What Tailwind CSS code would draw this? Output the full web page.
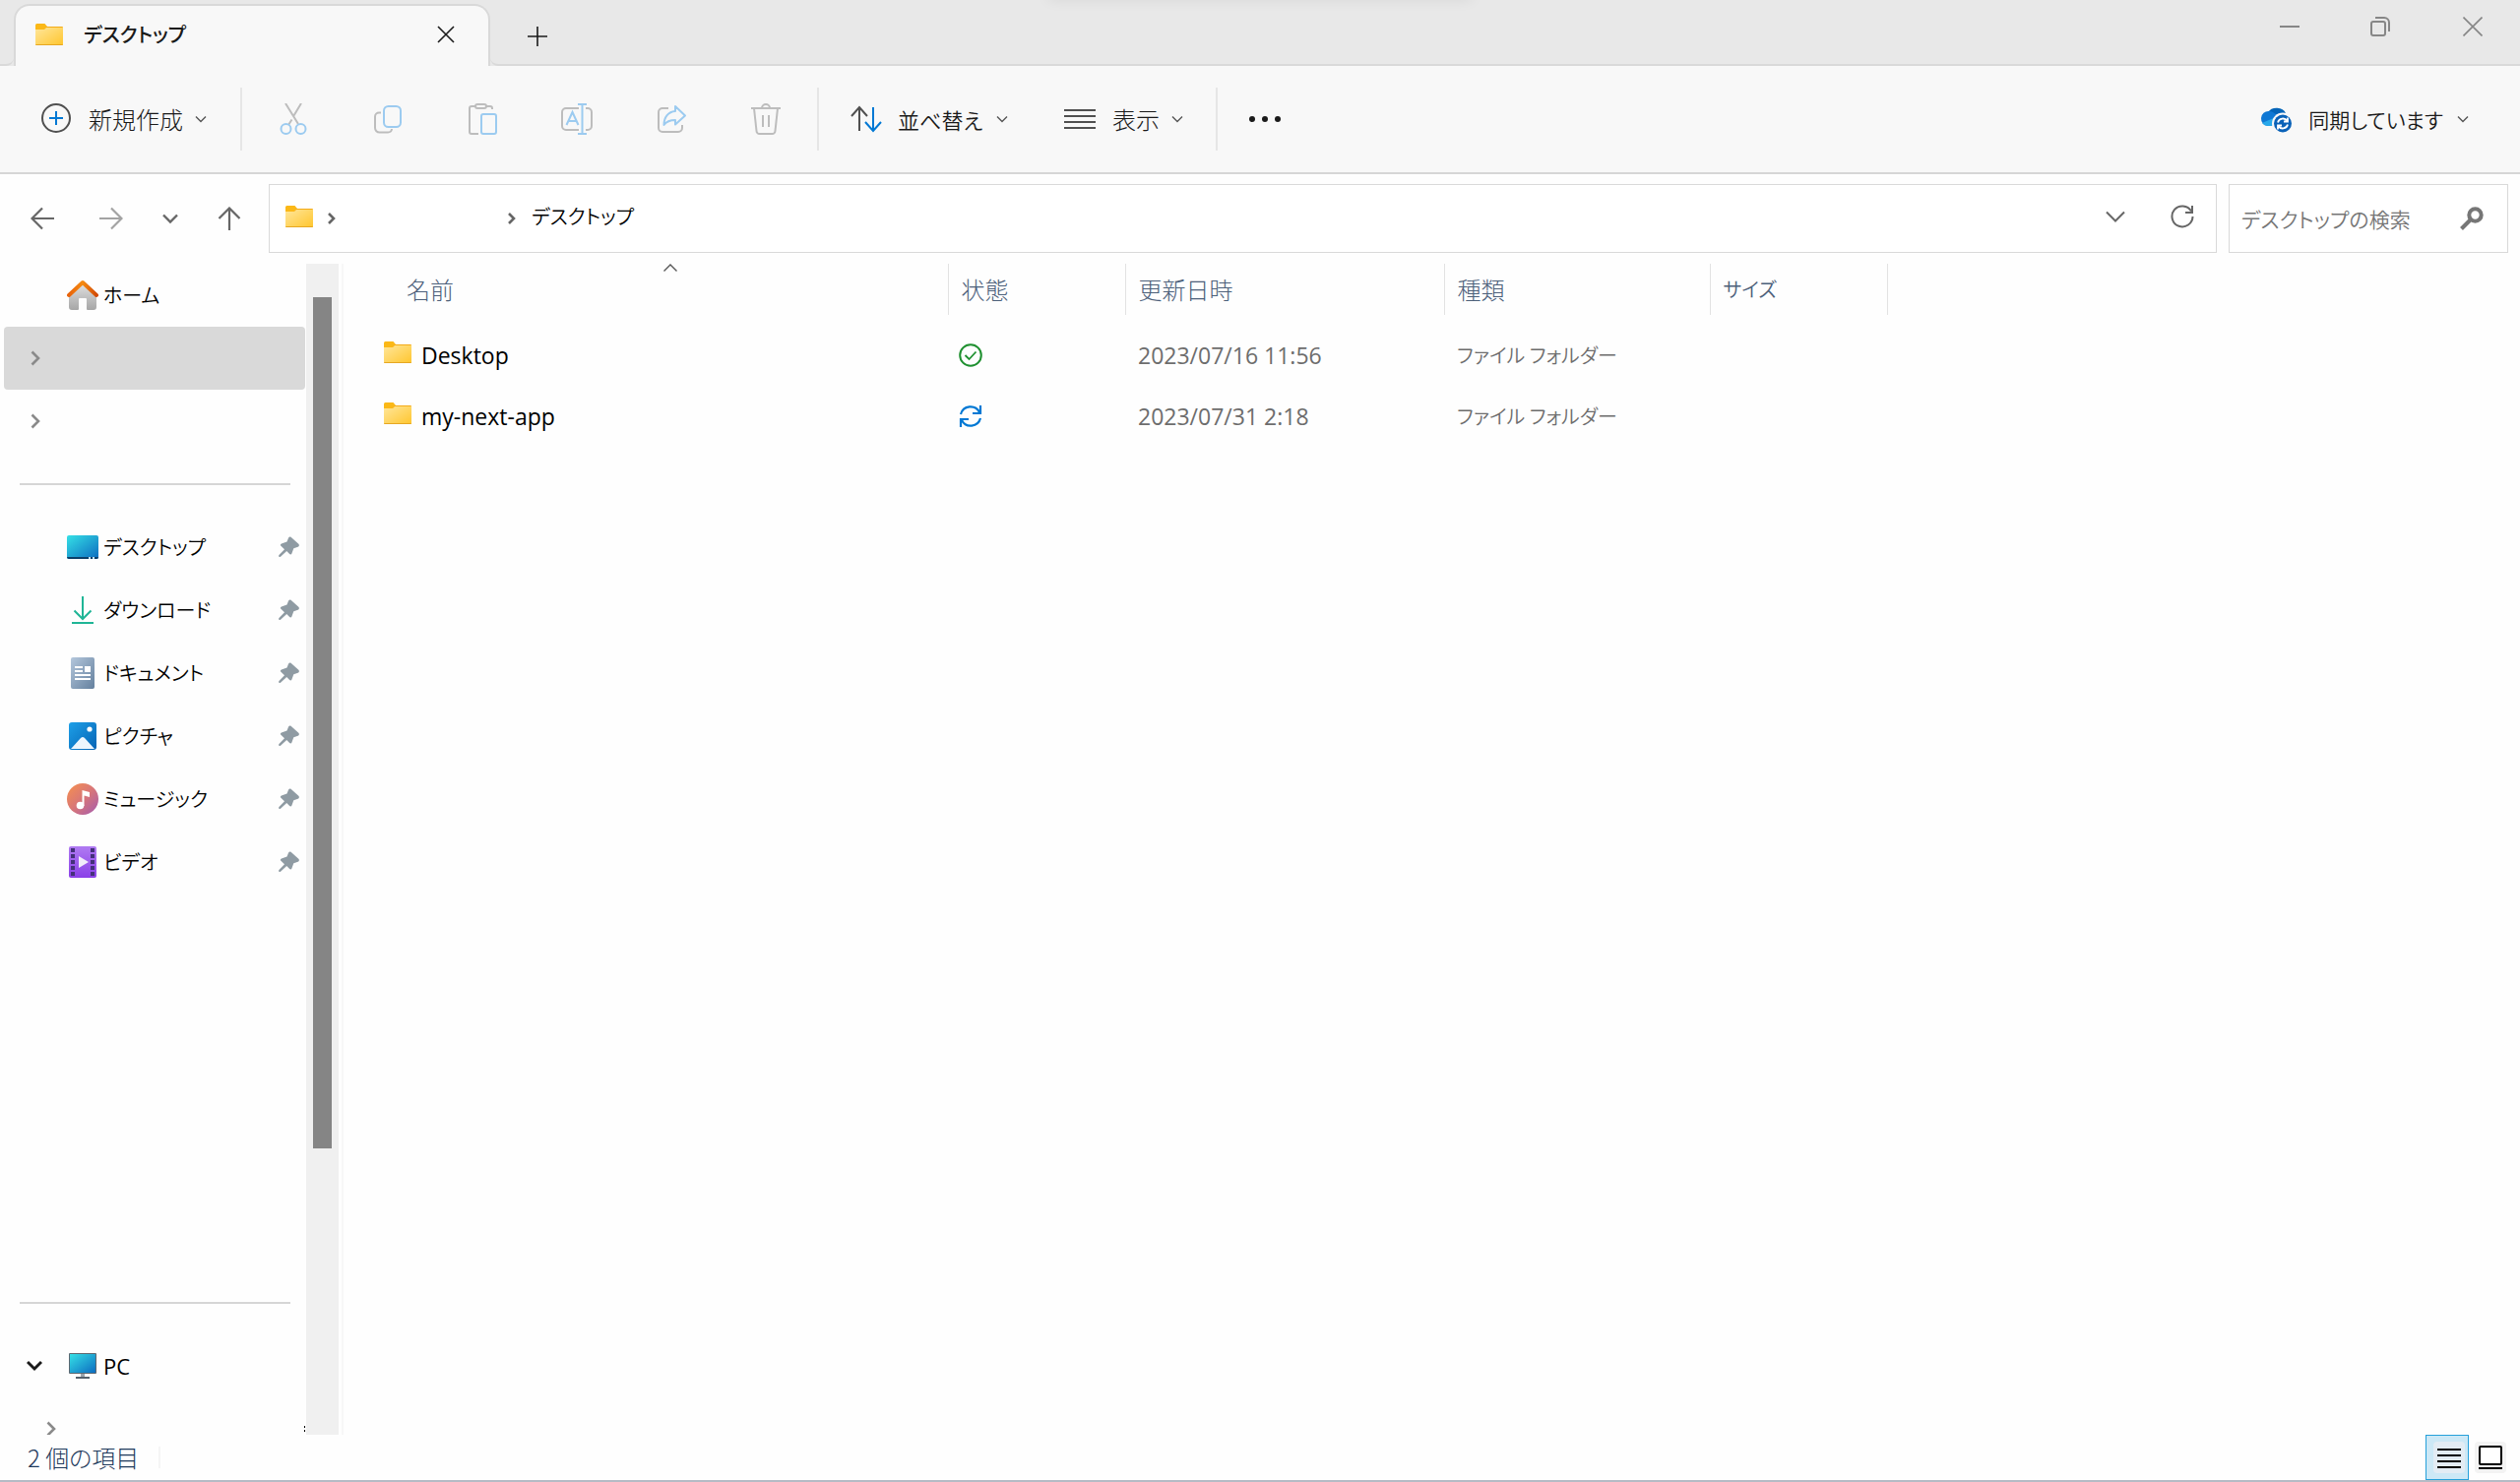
<!DOCTYPE html>
<html lang="ja">
<head>
<meta charset="utf-8">
<meta name="viewport" content="width=device-width, initial-scale=1">
<title>デスクトップ</title>
<script src="https://cdn.jsdelivr.net/npm/@tailwindcss/browser@4"></script>
</head>
<body class="flex h-screen flex-col overflow-hidden bg-[#fefefe] font-['Noto_Sans_CJK_JP',sans-serif] text-[24px] leading-8 font-light text-[#1a1a1a] [font-feature-settings:'palt']">

<!-- Shared icons -->
<svg class="absolute size-0" aria-hidden="true">
  <defs>
    <linearGradient id="gFolder" x1="0" y1="0" x2="1" y2="1"><stop offset="0" stop-color="#ffe69a"/><stop offset="1" stop-color="#ffc62e"/></linearGradient>
    <linearGradient id="gScreen" x1="0" y1="0" x2="1" y2="1"><stop offset="0" stop-color="#35e0e6"/><stop offset="1" stop-color="#0c6cc0"/></linearGradient>
    <linearGradient id="gRoof" x1="0" y1="0" x2="1" y2="0"><stop offset="0" stop-color="#e8640c"/><stop offset=".5" stop-color="#f58a10"/><stop offset="1" stop-color="#d24a06"/></linearGradient>
    <linearGradient id="gWall" x1="0" y1="0" x2="0" y2="1"><stop offset="0" stop-color="#e2e2e2"/><stop offset="1" stop-color="#a6a6a6"/></linearGradient>
    <linearGradient id="gDoc" x1="0" y1="0" x2="1" y2="1"><stop offset="0" stop-color="#b4c7dc"/><stop offset="1" stop-color="#64809e"/></linearGradient>
    <linearGradient id="gPic" x1="0" y1="0" x2="1" y2="1"><stop offset="0" stop-color="#1da0e8"/><stop offset="1" stop-color="#0663b4"/></linearGradient>
    <linearGradient id="gMusic" x1="0" y1="0" x2="1" y2="1"><stop offset="0" stop-color="#f7914d"/><stop offset=".5" stop-color="#d87678"/><stop offset="1" stop-color="#a45bb0"/></linearGradient>
    <linearGradient id="gVideo" x1="0" y1="0" x2="0" y2="1"><stop offset="0" stop-color="#b07bf2"/><stop offset="1" stop-color="#8a3fe8"/></linearGradient>
  </defs>
  <symbol id="folder" viewBox="0 0 28 22">
    <path d="M0 1.500A1.500 1.500 0 0 1 1.500 0H9.500L12 3V8H0z" fill="#fbb817"/>
    <path d="M11 3H27a1 1 0 0 1 1 1v2H9z" fill="#f3ab18"/>
    <path d="M0 6H9l2-2H28V21a1 1 0 0 1-1 1H1a1 1 0 0 1-1-1z" fill="url(#gFolder)"/>
    <path d="M0 21H28a1 1 0 0 1-1 1H1a1 1 0 0 1-1-1z" fill="#e6a722"/>
  </symbol>
  <symbol id="down" viewBox="0 0 12 8"><path d="M1 1.500l5 5 5-5" fill="none" stroke="currentColor" stroke-width="1.400"/></symbol>
  <symbol id="right" viewBox="0 0 10 16"><path d="M1.500 1.500L8 8l-6.500 6.500" fill="none" stroke="currentColor" stroke-width="2.600"/></symbol>
  <symbol id="pin" viewBox="0 0 22 22"><path d="M12.500.8l7.800 7c1 .9.700 2.500-.6 2.900l-4.400 1.500-1.900 5.400c-.4 1-1.500 1.200-2.200.5l-3-3L1.700 21 .2 20.800v-1.500l5.800-6-3.600-3.500c-.8-.8-.5-2 .5-2.400l5.600-1.800 1.600-4c.4-1 1.600-1.400 2.400-.8z" fill="#8f9ba3"/></symbol>
</svg>

<!-- Title bar -->
<header class="relative flex h-[67px] shrink-0 items-end bg-[#e8e8e8]">
  <div class="absolute top-[-10px] left-[1065px] h-2.5 w-[430px] shadow-[0_0_14px_rgba(0,0,0,0.08)]"></div>
  <div class="h-full w-[14px] rounded-br-lg border-b-2 border-[#d9d9d9]"></div>
  <div class="flex h-[63px] w-[484px] items-center rounded-t-2xl border-2 border-b-0 border-[#d9d9d9] bg-[#f8f8f8] pr-[34px] pb-1 pl-5">
    <svg class="h-[22px] w-7"><use href="#folder"/></svg>
    <span class="ml-[21px] text-[20px] font-medium">デスクトップ</span>
    <button class="ml-auto" aria-label="タブを閉じる"><svg class="size-[18px]" viewBox="0 0 18 18" fill="none" stroke="#1a1a1a" stroke-width="1.600"><path d="M1 1l16 16M17 1L1 17"/></svg></button>
  </div>
  <div class="flex h-full flex-1 rounded-bl-lg border-b-2 border-[#d9d9d9]">
    <button class="ml-6 flex w-12 items-center justify-center pt-2" aria-label="新しいタブ"><svg class="size-5" viewBox="0 0 20 20" fill="none" stroke="#1a1a1a" stroke-width="1.600"><path d="M10 0v20M0 10h20"/></svg></button>
    <div class="ml-auto flex h-[54px] text-[#868686]">
      <button class="flex w-[92px] items-center justify-center" aria-label="最小化"><svg class="size-5" viewBox="0 0 20 20" stroke="currentColor" stroke-width="2"><path d="M0 10h20"/></svg></button>
      <button class="flex w-[92px] items-center justify-center" aria-label="元に戻す"><svg class="size-5" viewBox="0 0 20 20" fill="none" stroke="currentColor" stroke-width="2"><rect x="1" y="5" width="14" height="14" rx="2"/><path d="M5 1h9a5 5 0 0 1 5 5v9"/></svg></button>
      <button class="flex w-24 items-center justify-center" aria-label="閉じる"><svg class="size-5" viewBox="0 0 20 20" fill="none" stroke="currentColor" stroke-width="1.600"><path d="M.5.5l19 19M19.500.5l-19 19"/></svg></button>
    </div>
  </div>
</header>

<!-- Command bar -->
<nav class="flex h-[110px] shrink-0 items-center border-b-2 border-[#d6d6d6] bg-[#f8f8f8]">
  <button class="flex h-16 w-[244px] items-center pl-[41px]">
    <svg class="size-8" viewBox="0 0 32 32" fill="none"><circle cx="16" cy="15" r="14" stroke="#505050" stroke-width="2"/><path d="M16 8v14M9 15h14" stroke="#0078d4" stroke-width="2"/></svg>
    <span class="ml-[17px]">新規作成</span>
    <svg class="ml-3 h-2 w-3 text-[#555]"><use href="#down"/></svg>
  </button>
  <div class="h-16 w-0.5 bg-[#e6e6e6]"></div>
  <div class="mx-1 flex">
    <button class="flex h-16 w-24 items-center justify-center" aria-label="切り取り"><svg class="size-8" viewBox="0 0 32 32" fill="none" stroke-width="2"><path d="M8 0l13 21M24 0l-7.500 12.500M14.500 16.500L11 22" stroke="#bdbdbd"/><g stroke="#9ccbf0"><circle cx="8.500" cy="26" r="5"/><circle cx="23.500" cy="26" r="5"/></g></svg></button>
    <button class="flex h-16 w-24 items-center justify-center" aria-label="コピー"><svg class="size-8" viewBox="0 0 32 32" fill="none" stroke-width="2"><path d="M9 9.500H7A4 4 0 0 0 3 13.500V25a4.500 4.500 0 0 0 4.500 4.500H16a4 4 0 0 0 4-3.500" stroke="#bdbdbd"/><rect x="12" y="3" width="17" height="21" rx="4.500" stroke="#9ccbf0"/></svg></button>
    <button class="flex h-16 w-24 items-center justify-center" aria-label="貼り付け"><svg class="size-8" viewBox="0 0 32 32" fill="none" stroke-width="2"><path d="M9 3H5a2 2 0 0 0-2 2v24a2 2 0 0 0 2 2h7M20 3h4a2 2 0 0 1 2 2v1" stroke="#bdbdbd"/><rect x="9" y="1" width="11" height="4" rx="2" stroke="#bdbdbd"/><rect x="15" y="11" width="15" height="20" rx="2" stroke="#9ccbf0"/></svg></button>
    <button class="flex h-16 w-24 items-center justify-center" aria-label="名前の変更"><svg class="size-8" viewBox="0 0 32 32" fill="none" stroke-width="2"><path d="M18 5H5a4 4 0 0 0-4 4v14a4 4 0 0 0 4 4h13M25 5h2a4 4 0 0 1 4 4v14a4 4 0 0 1-4 4h-2" stroke="#bdbdbd"/><path d="M17 1h9M17 31h9M21.500 1v30M5.500 22L11.500 9l6 13M7.500 18h8" stroke="#9ccbf0"/></svg></button>
    <button class="flex h-16 w-24 items-center justify-center" aria-label="共有"><svg class="size-8" viewBox="0 0 32 32" fill="none" stroke-width="2"><path d="M13 5H7a4 4 0 0 0-4 4v16a4 4 0 0 0 4 4h16a4 4 0 0 0 4-4v-3" stroke="#bdbdbd"/><path d="M20 3l10 9.500L20 21.500V17c-5 0-9 1.500-11.500 5C8.500 14 13 8.500 20 8z" stroke="#9ccbf0" stroke-linejoin="round"/></svg></button>
    <button class="flex h-16 w-24 items-center justify-center" aria-label="削除"><svg class="size-8" viewBox="0 0 32 32" fill="none" stroke="#bdbdbd" stroke-width="2"><path d="M1 5h30M4 5l2.500 23a3 3 0 0 0 3 3h13a3 3 0 0 0 3-3L28 5M12 5a4 4 0 0 1 8 0M13 12v12M19 12v12"/></svg></button>
  </div>
  <div class="h-16 w-0.5 bg-[#e6e6e6]"></div>
  <button class="flex h-16 w-[216px] items-center pl-8">
    <svg class="size-8" viewBox="0 0 32 32" fill="none" stroke-width="2"><path d="M9 28V4M1 13l8-9 8 9" stroke="#505050"/><path d="M23 4v24M15 19l8 9 8-9" stroke="#0078d4"/></svg>
    <span class="ml-4 text-[22px] font-[350]">並べ替え</span>
    <svg class="ml-3.5 h-2 w-3 text-[#555]"><use href="#down"/></svg>
  </button>
  <button class="flex h-16 w-[187px] items-center pl-[33px]">
    <svg class="size-8" viewBox="0 0 32 32" stroke="#505050" stroke-width="2"><path d="M0 7h32M0 13h32M0 19h32M0 25h32"/></svg>
    <span class="ml-[17px]">表示</span>
    <svg class="ml-3 h-2 w-3 text-[#555]"><use href="#down"/></svg>
  </button>
  <div class="h-16 w-0.5 bg-[#e6e6e6]"></div>
  <button class="flex h-16 w-24 items-center justify-center" aria-label="もっと見る"><svg class="size-8" viewBox="0 0 32 32" fill="#1a1a1a"><circle cx="3" cy="16" r="3"/><circle cx="16" cy="16" r="3"/><circle cx="29" cy="16" r="3"/></svg></button>
  <button class="mr-[52px] ml-auto flex h-16 items-center">
    <svg class="size-8" viewBox="0 0 32 32"><path d="M8 9a10 8.500 0 0 1 18 1L16 14z" fill="#0364b8"/><path d="M8 22a7.500 7.500 0 0 1 1-15c3 0 5 1.500 7 3l10 3-4 9z" transform="translate(0 1)" fill="#0f78d4"/><path d="M2 20l14-6 6 9H8a7.500 7.500 0 0 1-6-3z" fill="#28a8ea"/><circle cx="23" cy="20.500" r="11" fill="#f8f8f8"/><circle cx="23" cy="20.500" r="9" fill="#0a62b8"/><path d="M18 19.500a5.200 5.200 0 0 1 9.500-1.500M28 21.500a5.200 5.200 0 0 1-9.500 1.500M28 14.500v4h-4M18 26.500v-4h4" fill="none" stroke="#fff" stroke-width="1.800"/></svg>
    <span class="ml-[17px] text-[21px] font-[350]">同期しています</span>
    <svg class="ml-3.5 h-2 w-3 text-[#555]"><use href="#down"/></svg>
  </button>
</nav>

<!-- Navigation and address row -->
<div class="flex h-[91px] shrink-0 items-start pt-2.5 pr-3 text-[#666]">
  <div class="flex h-[70px] w-[273px] items-center pl-[31px]">
    <button aria-label="戻る"><svg class="size-6" viewBox="0 0 24 24" fill="none" stroke="currentColor" stroke-width="2.200"><path d="M24 12H2M12 1.500L1.500 12 12 22.500"/></svg></button>
    <button class="ml-[46px] text-[#a3a3a3]" aria-label="進む"><svg class="size-6" viewBox="0 0 24 24" fill="none" stroke="currentColor" stroke-width="2.200"><path d="M0 12h22M12 1.500L22.500 12 12 22.500"/></svg></button>
    <button class="ml-10" aria-label="最近表示した場所"><svg class="h-3 w-4" viewBox="0 0 16 12" fill="none" stroke="currentColor" stroke-width="2.400"><path d="M1 2.500l7 7 7-7"/></svg></button>
    <button class="ml-10" aria-label="上へ"><svg class="size-6" viewBox="0 0 24 24" fill="none" stroke="currentColor" stroke-width="2.200"><path d="M12 24V2M1.500 12L12 1.500 22.500 12"/></svg></button>
  </div>
  <div class="flex h-[70px] flex-1 items-center border border-[#d9d9d9] bg-white pb-1 pl-4">
    <svg class="h-[22px] w-7"><use href="#folder"/></svg>
    <svg class="mt-1 ml-[15px] h-3 w-2" viewBox="0 0 8 12" fill="none" stroke="currentColor" stroke-width="2.600"><path d="M1 1l5 5-5 5"/></svg>
    <svg class="mt-1 ml-[175px] h-3 w-2" viewBox="0 0 8 12" fill="none" stroke="currentColor" stroke-width="2.600"><path d="M1 1l5 5-5 5"/></svg>
    <a href="#" class="ml-4 text-[20px] font-[350] text-black">デスクトップ</a>
    <button class="ml-auto" aria-label="以前の場所"><svg class="h-3 w-5" viewBox="0 0 20 12" fill="none" stroke="currentColor" stroke-width="2"><path d="M1 1.500l9 9 9-9"/></svg></button>
    <button class="mr-[22px] ml-[46px]" aria-label="最新の情報に更新"><svg class="size-6" viewBox="0 0 24 24" fill="none" stroke="currentColor" stroke-width="2"><path d="M22.500 12A10.500 10.500 0 1 1 21 6.500M22 1v7h-7"/></svg></button>
  </div>
  <label class="ml-3 flex h-[70px] w-[284px] items-center border border-[#d9d9d9] bg-white pr-6 pl-3">
    <input type="search" aria-label="検索" placeholder="デスクトップの検索" class="w-0 flex-1 text-[21px] font-[350] outline-none placeholder:text-[#767676]">
    <svg class="size-6" viewBox="0 0 24 24" fill="none" stroke="#767676" stroke-width="4"><circle cx="15.500" cy="8.500" r="6.200"/><path d="M11 13L1.500 22.500"/></svg>
  </label>
</div>

<main class="flex min-h-0 flex-1 font-[350]">
  <!-- Navigation pane -->
  <aside class="flex w-[311px] shrink-0 flex-col overflow-hidden text-[20px] text-black">
    <a href="#" class="flex h-16 shrink-0 items-center pl-[68px]">
      <svg class="size-8" viewBox="0 0 32 32"><path d="M2 14L16 3l14 11v14a3 3 0 0 1-3 3h-6a1 1 0 0 1-1-1V20a1 1 0 0 0-1-1h-6a1 1 0 0 0-1 1v10a1 1 0 0 1-1 1H5a3 3 0 0 1-3-3z" fill="url(#gWall)"/><path d="M2 16L16 3l14 13" fill="none" stroke="url(#gRoof)" stroke-width="4" stroke-linecap="round" stroke-linejoin="round"/></svg>
      <span class="ml-[5px]">ホーム</span>
    </a>
    <button class="mr-px ml-1 flex h-16 shrink-0 items-center rounded-sm bg-[#d9d9d9] pl-[27px] text-[#8a8a8a]" aria-label="展開"><svg class="h-4 w-2.5"><use href="#right"/></svg></button>
    <button class="ml-1 flex h-16 shrink-0 items-center pl-[27px] text-[#8a8a8a]" aria-label="展開"><svg class="h-4 w-2.5"><use href="#right"/></svg></button>
    <div class="flex h-16 shrink-0 items-center pr-4 pl-5"><hr class="h-0.5 flex-1 border-0 bg-[#d6d6d6]"></div>
    <a href="#" class="flex h-16 shrink-0 items-center pr-1.5 pl-[68px]">
      <svg class="size-8" viewBox="0 0 32 32"><rect y="4" width="32" height="24" rx="2" fill="url(#gScreen)"/><path d="M0 26h32a2 2 0 0 1-2 2H2a2 2 0 0 1-2-2z" fill="#0b3f69"/><path d="M22 26h2v2h-2zM26 26h2v2h-2z" fill="#bfe0f5"/></svg>
      <span class="ml-[5px]">デスクトップ</span><svg class="ml-auto size-[22px]"><use href="#pin"/></svg>
    </a>
    <a href="#" class="flex h-16 shrink-0 items-center pr-1.5 pl-[68px]">
      <svg class="size-8" viewBox="0 0 32 32" fill="none" stroke="#1fb596" stroke-width="2"><path d="M16 2v22M7.500 16.500L16 25l8.500-8.500M5 29h22"/></svg>
      <span class="ml-[5px]">ダウンロード</span><svg class="ml-auto size-[22px]"><use href="#pin"/></svg>
    </a>
    <a href="#" class="flex h-16 shrink-0 items-center pr-1.5 pl-[68px]">
      <svg class="size-8" viewBox="0 0 32 32"><rect x="4" width="24" height="32" rx="2" fill="url(#gDoc)"/><path d="M8 10h8M8 14h8M8 18h16M8 22h16" stroke="#fff" stroke-width="2"/><path d="M18 9h6v6h-6z" fill="#fff"/></svg>
      <span class="ml-[5px]">ドキュメント</span><svg class="ml-auto size-[22px]"><use href="#pin"/></svg>
    </a>
    <a href="#" class="flex h-16 shrink-0 items-center pr-1.5 pl-[68px]">
      <svg class="size-8" viewBox="0 0 32 32"><rect x="2" y="2" width="28" height="28" rx="3" fill="url(#gPic)"/><path d="M4 29L14 18a3 3 0 0 1 4 0l10 11z" fill="#eef6fd"/><circle cx="23" cy="9" r="2.600" fill="#fff"/></svg>
      <span class="ml-[5px]">ピクチャ</span><svg class="ml-auto size-[22px]"><use href="#pin"/></svg>
    </a>
    <a href="#" class="flex h-16 shrink-0 items-center pr-1.5 pl-[68px]">
      <svg class="size-8" viewBox="0 0 32 32"><circle cx="16" cy="16" r="16" fill="url(#gMusic)"/><circle cx="13.500" cy="22.500" r="3.800" fill="#fff"/><path d="M15.500 7l7.500 2v5l-5.500-1.500V23h-2z" fill="#fff"/></svg>
      <span class="ml-[5px]">ミュージック</span><svg class="ml-auto size-[22px]"><use href="#pin"/></svg>
    </a>
    <a href="#" class="flex h-16 shrink-0 items-center pr-1.5 pl-[68px]">
      <svg class="size-8" viewBox="0 0 32 32"><rect x="2" width="28" height="32" rx="2" fill="url(#gVideo)"/><path d="M6 2v29M26 2v29" stroke="#44307a" stroke-width="4" stroke-dasharray="4 2"/><path d="M12 10v12l10-6z" fill="#f1ecfa"/></svg>
      <span class="ml-[5px]">ビデオ</span><svg class="ml-auto size-[22px]"><use href="#pin"/></svg>
    </a>
    <div class="h-96 shrink-0"></div>
    <div class="flex h-16 shrink-0 items-center pr-4 pl-5"><hr class="h-0.5 flex-1 border-0 bg-[#d6d6d6]"></div>
    <a href="#" class="flex h-16 shrink-0 items-center pl-[27px]">
      <svg class="h-3 w-4" viewBox="0 0 16 12" fill="none" stroke="#1a1a1a" stroke-width="3"><path d="M1 2l7 7 7-7"/></svg>
      <svg class="ml-[25px] size-8" viewBox="0 0 32 32"><path d="M14 24h4v4h-4z" fill="#9aa3ab"/><path d="M9 27h14v2H9z" fill="#54606b"/><rect x="2" y="3" width="28" height="21" rx="1" fill="#5c6770"/><rect x="3" y="4" width="26" height="19" fill="url(#gScreen)"/></svg>
      <span class="ml-[5px] font-['Open_Sans',sans-serif] text-[22px] font-normal">PC</span>
    </a>
    <button class="flex h-16 shrink-0 items-center pl-[47px] text-[#8a8a8a]" aria-label="展開"><svg class="h-4 w-2.5"><use href="#right"/></svg><svg class="mr-px ml-auto h-1.5 w-px" viewBox="0 0 1 6" fill="#000"><path d="M0 0h1v2H0zM0 4h1v2H0z"/></svg></button>
  </aside>
  <!-- Scroll bar -->
  <div class="flex w-[33px] shrink-0 flex-col items-center bg-[#f0f0f0] pt-[34px]">
    <div class="h-[865px] w-[19px] bg-[#858585]"></div>
  </div>
  <div class="ml-[3px] w-0.5 shrink-0 bg-[#f7f7f7]"></div>

  <!-- File list -->
  <section class="flex-1">
    <table class="table-fixed border-collapse text-left text-[20px] text-[#6d6d6d]">
      <thead class="text-[24px] text-[#4c607a]">
        <tr class="h-[52px]">
          <th class="relative w-[614px] border-r border-[#e2e2e2] pl-16 font-light">名前
            <svg class="absolute top-0 left-[325px] h-2 w-3.5" viewBox="0 0 14 8" fill="none" stroke="#555" stroke-width="1.400"><path d="M.5 7.500L7 1l6.500 6.500"/></svg>
          </th>
          <th class="w-[180px] border-r border-[#e2e2e2] pl-[13px] font-light">状態</th>
          <th class="w-[324px] border-r border-[#e2e2e2] pl-[13px] font-light">更新日時</th>
          <th class="w-[270px] border-r border-[#e2e2e2] pl-[13px] font-light">種類</th>
          <th class="w-[180px] border-r border-[#e2e2e2] pl-[13px] text-[20px] font-[350]">サイズ</th>
        </tr>
      </thead>
      <tbody>
        <tr class="h-2.5"></tr>
        <tr class="h-[62px]">
          <td class="pl-[41px]"><a href="#" class="flex items-center font-['Open_Sans',sans-serif] text-[23px] font-normal text-black"><svg class="mb-1.5 h-[22px] w-7"><use href="#folder"/></svg><span class="ml-2.5">Desktop</span></a></td>
          <td class="pl-[11px]"><svg class="size-6" viewBox="0 0 24 24" fill="none" stroke="#1f9030"><circle cx="12" cy="12" r="10.800" stroke-width="2"/><path d="M6.500 12l4 4 7-7.500" stroke-width="1.800"/></svg></td>
          <td class="pl-[13px] font-['Open_Sans',sans-serif] text-[23px] font-normal">2023/07/16 11:56</td>
          <td class="pl-[13px]">ファイル フォルダー</td>
          <td></td>
        </tr>
        <tr class="h-[62px]">
          <td class="pl-[41px]"><a href="#" class="flex items-center font-['Open_Sans',sans-serif] text-[23px] font-normal text-black"><svg class="mb-1.5 h-[22px] w-7"><use href="#folder"/></svg><span class="ml-2.5">my-next-app</span></a></td>
          <td class="pl-[11px]"><svg class="size-6" viewBox="0 0 24 24" fill="none" stroke="#0078d4" stroke-width="2.200"><path d="M2 10A10.200 10.200 0 0 1 21 8M22 1v8h-8M22 14A10.200 10.200 0 0 1 3 16M2 23v-8h8"/></svg></td>
          <td class="pl-[13px] font-['Open_Sans',sans-serif] text-[23px] font-normal">2023/07/31 2:18</td>
          <td class="pl-[13px]">ファイル フォルダー</td>
          <td></td>
        </tr>
      </tbody>
    </table>
  </section>
</main>

<!-- Status bar -->
<footer class="flex h-12 shrink-0 items-center border-b-2 border-[#b5bbc5] pl-7 text-[#1e395b]">
  <span>2 個の項目</span>
  <div class="ml-5 h-[22px] w-0.5 bg-[#f5f5f5]"></div>
  <div class="ml-auto flex h-full items-center pr-3.5">
    <button class="flex h-full w-11 items-center justify-end border border-[#26a0da] bg-[#cce8f6] pr-[3px]" aria-label="詳細"><svg class="size-8" viewBox="0 0 32 32"><rect width="32" height="32" rx="4" fill="#e3ecf4"/><path d="M4 8h24M4 14h24M4 20h24M4 26h24" stroke="#000" stroke-width="2"/></svg></button>
    <button class="ml-1.5" aria-label="大アイコン"><svg class="size-8" viewBox="0 0 32 32"><rect width="32" height="32" rx="4" fill="#f3f3f3"/><rect x="5" y="5" width="22" height="18" rx="1" fill="#fff" stroke="#000" stroke-width="2"/><path d="M4 27h24" stroke="#000" stroke-width="2"/></svg></button>
  </div>
</footer>
</body>
</html>
